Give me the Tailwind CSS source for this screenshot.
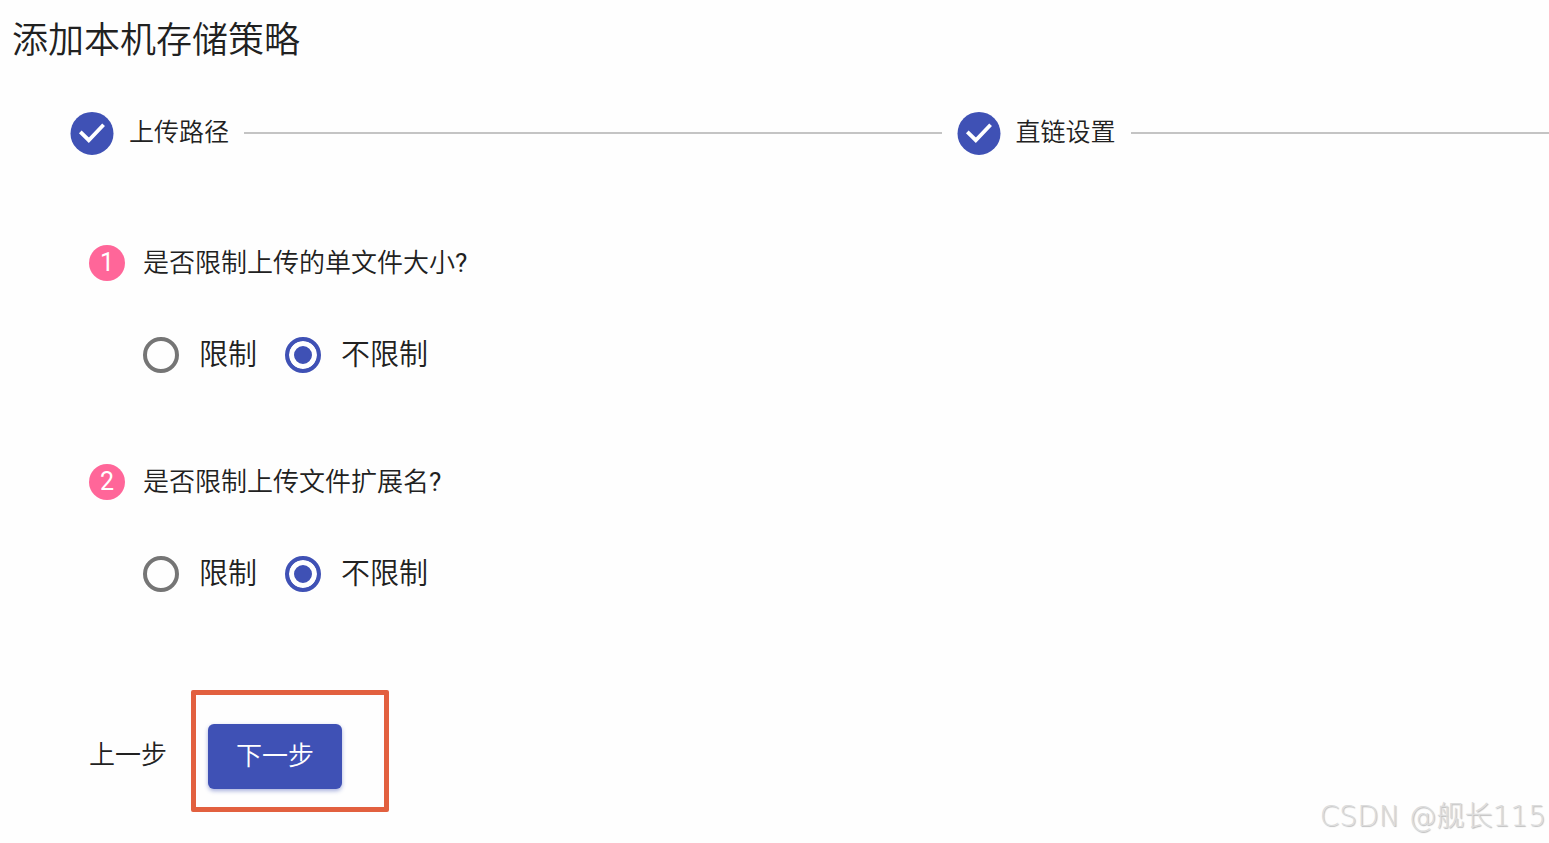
<!DOCTYPE html>
<html lang="zh-CN">
<head>
<meta charset="utf-8">
<meta name="viewport" content="width=device-width, initial-scale=1">
<title>添加本机存储策略</title>
<script src="https://cdn.jsdelivr.net/npm/@tailwindcss/browser@4"></script>
</head>
<body class="relative min-h-screen bg-[#fefefe] font-['Roboto','Noto_Sans_CJK_SC',sans-serif] font-[350] text-[#212121]">
<main class="pb-6">
  <h1 class="pt-[17px] pl-3 text-[36px] leading-[48px] font-[350]">添加本机存储策略</h1>

  <ol class="mt-[46px] flex items-center gap-[15px] pl-[70px]">
    <li class="flex items-center gap-[15px] text-[25px] leading-[44px]">
      <svg class="size-[44px]" viewBox="0 0 44 44" aria-hidden="true"><circle cx="22" cy="22.4" r="21.5" fill="#3f51b5"/><path d="M10.3 20.8 18.8 29.2 33.6 13.8" fill="none" stroke="#fff" stroke-width="3.8"/></svg>
      <span>上传路径</span>
    </li>
    <li class="h-[2px] flex-[5] bg-[#c4c4c4]" role="presentation"></li>
    <li class="flex items-center gap-[15px] text-[25px] leading-[44px]">
      <svg class="size-[44px]" viewBox="0 0 44 44" aria-hidden="true"><circle cx="22" cy="22.4" r="21.5" fill="#3f51b5"/><path d="M10.3 20.8 18.8 29.2 33.6 13.8" fill="none" stroke="#fff" stroke-width="3.8"/></svg>
      <span>直链设置</span>
    </li>
    <li class="h-[2px] flex-[3] bg-[#c4c4c4]" role="presentation"></li>
  </ol>

  <form class="mt-[90px] pl-[89px]">
    <section class="flex items-start gap-[18px]">
      <span class="flex size-[36px] items-center justify-center rounded-full bg-[#ff6699] text-[25px] leading-[36px] font-normal text-white">1</span>
      <div role="radiogroup" aria-labelledby="q1">
        <p id="q1" class="text-[26px] leading-[36px]">是否限制上传的单文件大小<span class="font-normal">?</span></p>
        <div class="mt-[52px] flex gap-[28px] text-[29px] leading-[44px]">
          <label class="flex items-center gap-5"><input type="radio" name="size" value="limit" class="size-[36px] appearance-none rounded-full border-4 border-[#757575] checked:border-[#3f51b5] checked:bg-[#3f51b5] checked:shadow-[inset_0_0_0_5px_#fefefe]">限制</label>
          <label class="flex items-center gap-5"><input type="radio" name="size" value="none" checked class="size-[36px] appearance-none rounded-full border-4 border-[#757575] checked:border-[#3f51b5] checked:bg-[#3f51b5] checked:shadow-[inset_0_0_0_5px_#fefefe]">不限制</label>
        </div>
      </div>
    </section>

    <section class="mt-[87px] flex items-start gap-[18px]">
      <span class="flex size-[36px] items-center justify-center rounded-full bg-[#ff6699] text-[25px] leading-[36px] font-normal text-white">2</span>
      <div role="radiogroup" aria-labelledby="q2">
        <p id="q2" class="text-[26px] leading-[36px]">是否限制上传文件扩展名<span class="font-normal">?</span></p>
        <div class="mt-[52px] flex gap-[28px] text-[29px] leading-[44px]">
          <label class="flex items-center gap-5"><input type="radio" name="ext" value="limit" class="size-[36px] appearance-none rounded-full border-4 border-[#757575] checked:border-[#3f51b5] checked:bg-[#3f51b5] checked:shadow-[inset_0_0_0_5px_#fefefe]">限制</label>
          <label class="flex items-center gap-5"><input type="radio" name="ext" value="none" checked class="size-[36px] appearance-none rounded-full border-4 border-[#757575] checked:border-[#3f51b5] checked:bg-[#3f51b5] checked:shadow-[inset_0_0_0_5px_#fefefe]">不限制</label>
        </div>
      </div>
    </section>

    <div class="mt-[94px] flex items-start gap-[24px]">
      <button type="button" class="mt-[43px] text-[26px] leading-[44px]">上一步</button>
      <div class="rounded-xs border-[5px] border-[#e2603f] pt-[29px] pr-[42px] pb-[18px] pl-[12px]">
        <button type="button" class="block rounded-md bg-[#3f51b5] px-[28px] pt-[10px] pb-[11px] text-[26px] leading-[44px] font-[350] text-white shadow-[0_2px_4px_rgba(63,81,181,0.45)]">下一步</button>
      </div>
    </div>
  </form>
</main>
<div class="absolute right-[3px] bottom-[8px] font-['DejaVu_Sans','Noto_Sans_CJK_SC',sans-serif] font-extralight text-[28px] leading-[36px] text-[#dcdcdc] [text-shadow:1px_1px_1px_#bdbdbd]">CSDN @舰长115</div>
</body>
</html>
